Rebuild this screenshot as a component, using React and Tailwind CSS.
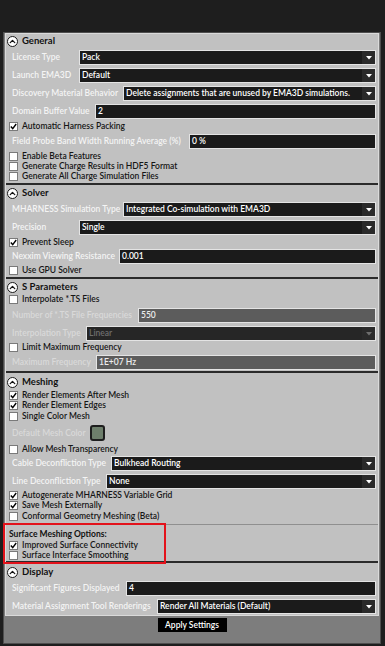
import { ChevronUp } from 'lucide-react';

function Header({ title, className }) {
  return (
    <div className={`flex h-[12px] items-center gap-[4px] pl-[1px] ${className}`}>
      <div className="flex h-[11px] w-[11px] items-center justify-center rounded-full border border-[#1a1a1a] bg-white">
        <ChevronUp size={9} strokeWidth={3.5} color="#111" />
      </div>
      <span className="whitespace-nowrap text-[9.5px] font-bold leading-none text-[#111]">{title}</span>
    </div>
  );
}

function Check({ label, checked, className, h = 'h-[10px]' }) {
  return (
    <div className={`flex items-center gap-[4px] pl-[3px] ${h} ${className}`}>
      <div className="flex h-[9px] w-[9px] shrink-0 items-center justify-center border border-[#7a7a7a] bg-white">
        {checked ? (
          <svg width="7" height="7" viewBox="0 0 7 7">
            <path d="M0.8 3.6 L2.7 5.6 L6.2 1" fill="none" stroke="#000" strokeWidth="1.4" />
          </svg>
        ) : null}
      </div>
      <span className="whitespace-nowrap text-[8.5px] font-semibold leading-none text-[#161616]">{label}</span>
    </div>
  );
}

function Field({ label, value, labelW, select, disabled, className }) {
  const box = disabled
    ? select
      ? 'bg-[#262626] text-[#6e6e6e]'
      : 'bg-[#5c5c5c] text-[#ececec]'
    : 'bg-[#1b1b1b] text-white';
  return (
    <div className={`flex h-[15px] items-stretch pl-[6px] pr-[2px] ${className}`}>
      <div
        className={`flex shrink-0 items-center whitespace-nowrap text-[8.5px] font-semibold leading-none ${labelW} ${
          disabled ? 'text-[#d9d9d9]' : 'text-[#f4f4f4]'
        }`}
      >
        {label}
      </div>
      <div className={`flex min-w-0 flex-1 items-center border border-[#e4e4e4] ${box}`}>
        <span className="flex-1 overflow-hidden whitespace-nowrap pl-[2px] text-[8.5px] font-semibold leading-none">
          {value}
        </span>
        {select ? (
          <div className="flex h-full w-[13px] shrink-0 items-center justify-center bg-[#2a2a2a]">
            <svg width="6" height="4" viewBox="0 0 6 4">
              <path d="M0 0 H6 L3 3.5 Z" fill={disabled ? '#6e6e6e' : '#fff'} />
            </svg>
          </div>
        ) : null}
      </div>
    </div>
  );
}

export default function App() {
  return (
    <div className="relative h-[646px] w-[385px] overflow-hidden bg-[#1e1e1e] font-['Lato',sans-serif]">
      <div className="ml-[3px] mt-[32px] h-[612px] w-[378px] border border-[#4e4e4e] bg-[#7d7d7d]">
        <div className="mx-[1px] border border-[#dadada] bg-[#c1c1c1]">
          {/* General */}
          <div className="border-b-2 border-[#2b2b2b] pb-[2px]">
            <Header title="General" className="mt-[1px]" />
            <Field label="License Type" value="Pack" labelW="w-[67px]" select className="mt-[3px]" />
            <Field label="Launch EMA3D" value="Default" labelW="w-[67px]" select className="mt-[3px]" />
            <Field
              label="Discovery Material Behavior"
              value="Delete assignments that are unused by EMA3D simulations."
              labelW="w-[111px]"
              select
              className="mt-[3px]"
            />
            <Field label="Domain Buffer Value" value="2" labelW="w-[83px]" className="mt-[3px]" />
            <Check label="Automatic Harness Packing" checked h="h-[11px]" className="mt-[2px]" />
            <Field
              label="Field Probe Band Width Running Average (%)"
              value="0 %"
              labelW="w-[177px]"
              className="mt-[2px]"
            />
            <Check label="Enable Beta Features" className="mt-[2px]" />
            <Check label="Generate Charge Results in HDF5 Format" />
            <Check label="Generate All Charge Simulation Files" />
          </div>

          {/* Solver */}
          <div className="border-b-2 border-[#2b2b2b] pb-[1px]">
            <Header title="Solver" className="mt-[2px]" />
            <Field
              label="MHARNESS Simulation Type"
              value="Integrated Co-simulation with EMA3D"
              labelW="w-[111px]"
              select
              className="mt-[3px]"
            />
            <Field label="Precision" value="Single" labelW="w-[67px]" select className="mt-[3px]" />
            <Check label="Prevent Sleep" checked h="h-[11px]" className="mt-[2px]" />
            <Field label="Nexxim Viewing Resistance" value="0.001" labelW="w-[107px]" className="mt-[1px]" />
            <Check label="Use GPU Solver" h="h-[11px]" className="mt-[1px]" />
          </div>

          {/* S Parameters */}
          <div className="border-b-2 border-[#2b2b2b] pb-[1px]">
            <Header title="S Parameters" className="mt-[2px]" />
            <Check label="Interpolate *.TS Files" h="h-[11px]" className="mt-[1px]" />
            <Field
              label="Number of *.TS File Frequencies"
              value="550"
              labelW="w-[126px]"
              disabled
              className="mt-[3px]"
            />
            <Field
              label="Interpolation Type"
              value="Linear"
              labelW="w-[74px]"
              select
              disabled
              className="mt-[3px]"
            />
            <Check label="Limit Maximum Frequency" h="h-[11px]" className="mt-[1px]" />
            <Field label="Maximum Frequency" value="1E+07 Hz" labelW="w-[84px]" disabled className="mt-[2px]" />
          </div>

          {/* Meshing */}
          <div className="border-b-2 border-[#2b2b2b] pb-[1px]">
            <Header title="Meshing" className="mt-[3px]" />
            <Check label="Render Elements After Mesh" checked className="mt-[2px]" />
            <Check label="Render Element Edges" checked />
            <Check label="Single Color Mesh" className="mt-[1px]" />
            <div className="mt-[4px] flex h-[16px] items-center pl-[6px]">
              <span className="w-[78px] whitespace-nowrap text-[8.5px] font-semibold leading-none text-[#d9d9d9]">
                Default Mesh Color
              </span>
              <div className="h-[16px] w-[15px] rounded-[3px] border-2 border-[#1e1e1e] bg-[#6e7f6c]" />
            </div>
            <Check label="Allow Mesh Transparency" className="mt-[3px]" />
            <Field
              label="Cable Deconfliction Type"
              value="Bulkhead Routing"
              labelW="w-[99px]"
              select
              className="mt-[2px]"
            />
            <Field label="Line Deconfliction Type" value="None" labelW="w-[94px]" select className="mt-[3px]" />
            <Check label="Autogenerate MHARNESS Variable Grid" checked className="mt-[1px]" />
            <Check label="Save Mesh Externally" checked />
            <Check label="Conformal Geometry Meshing (Beta)" className="mt-[1px]" />
            <div className="ml-[1px] mt-[3px] h-[1px] bg-[#8f8f8f]" />
            <div className="mt-[4px] flex h-[10px] items-center whitespace-nowrap pl-[3px] text-[8.5px] font-bold leading-none text-[#111]">
              Surface Meshing Options:
            </div>
            <Check label="Improved Surface Connectivity" checked className="mt-[1px]" />
            <Check label="Surface Interface Smoothing" />
          </div>

          {/* Display */}
          <div className="pb-[1px]">
            <Header title="Display" className="mt-[3px]" />
            <Field label="Significant Figures Displayed" value="4" labelW="w-[114px]" className="mt-[3px]" />
            <Field
              label="Material Assignment Tool Renderings"
              value="Render All Materials (Default)"
              labelW="w-[145px]"
              select
              className="mt-[3px]"
            />
          </div>
        </div>

        <div className="mx-auto mt-[2px] flex h-[14px] w-[69px] items-center justify-center whitespace-nowrap bg-black text-[8.5px] font-semibold leading-none text-white">
          Apply Settings
        </div>
      </div>

      {/* annotation */}
      <div className="absolute left-[3px] top-[523px] h-[41px] w-[163px] border-2 border-[#e3121b]" />
    </div>
  );
}
